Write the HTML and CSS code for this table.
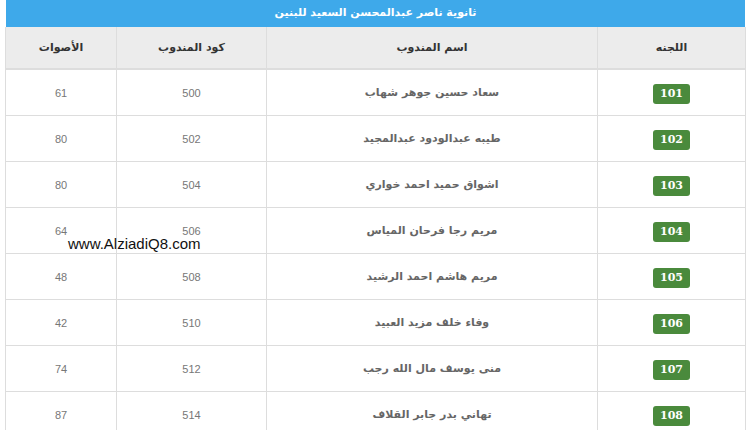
FILE: index.html
```html
<!DOCTYPE html>
<html lang="ar" dir="rtl">
<head>
<meta charset="utf-8">
<link rel="stylesheet" href="styles.css">
</head>
<body>
<div class="wrap">
  <div class="title">ثانوية ناصر عبدالمحسن السعيد للبنين</div>
  <table class="tbl">
    <thead>
      <tr><th class="c1">اللجنه</th><th class="c2">اسم المندوب</th><th class="c3">كود المندوب</th><th class="c4">الأصوات</th></tr>
    </thead>
    <tbody>
      <tr><td><span class="badge">101</span></td><td class="name">سعاد حسين جوهر شهاب</td><td class="num">500</td><td class="num">61</td></tr>
      <tr><td><span class="badge">102</span></td><td class="name">طيبه عبدالودود عبدالمجيد</td><td class="num">502</td><td class="num">80</td></tr>
      <tr><td><span class="badge">103</span></td><td class="name">اشواق حميد احمد خواري</td><td class="num">504</td><td class="num">80</td></tr>
      <tr><td><span class="badge">104</span></td><td class="name">مريم رجا فرحان المياس</td><td class="num">506</td><td class="num">64</td></tr>
      <tr><td><span class="badge">105</span></td><td class="name">مريم هاشم احمد الرشيد</td><td class="num">508</td><td class="num">48</td></tr>
      <tr><td><span class="badge">106</span></td><td class="name">وفاء خلف مزيد العبيد</td><td class="num">510</td><td class="num">42</td></tr>
      <tr><td><span class="badge">107</span></td><td class="name">منى يوسف مال الله رجب</td><td class="num">512</td><td class="num">74</td></tr>
      <tr><td><span class="badge">108</span></td><td class="name">تهاني بدر جابر القلاف</td><td class="num">514</td><td class="num">87</td></tr>
    </tbody>
  </table>
  <div class="watermark" dir="ltr">www.AlziadiQ8.com</div>
</div>
</body>
</html>
```
FILE: styles.css
```css
html, body {
  margin: 0;
  padding: 0;
  background: #ffffff;
}
body {
  font-family: "DejaVu Sans", sans-serif;
}
.wrap {
  position: relative;
  margin: 0 4px 0 5px;
  width: 741px;
}
.title {
  height: 27px;
  line-height: 25px;
  background: #3ea9ea;
  color: #ffffff;
  text-align: center;
  font-size: 11px;
  font-weight: bold;
  margin-left: 1px;
  margin-right: 1px;
}
.tbl {
  width: 741px;
  border-collapse: collapse;
  table-layout: fixed;
}
.tbl th, .tbl td {
  border: 1px solid #dddddd;
  text-align: center;
  vertical-align: middle;
  padding: 0;
}
.tbl th {
  height: 41px;
  background: #ececec;
  color: #333333;
  font-size: 11px;
  font-weight: bold;
  border-top: 0;
  border-bottom: 2px solid #dddddd;
}
.c1 { width: 147px; }
.c2 { width: 330px; }
.c3 { width: 149px; }
.c4 { width: 110px; }
.tbl td {
  height: 45px;
}
.name {
  color: #666666;
  font-size: 11px;
  font-weight: bold;
}
.num {
  color: #777777;
  font-family: "Liberation Sans", Arial, sans-serif;
  font-size: 11px;
}
.badge {
  display: inline-block;
  width: 37px;
  height: 20px;
  line-height: 20px;
  background: #4a8a3c;
  color: #ffffff;
  border-radius: 3px;
  font-family: "DejaVu Serif", serif;
  font-weight: bold;
  font-size: 11px;
}
.watermark {
  position: absolute;
  left: 63px;
  top: 235px;
  font-family: "Liberation Sans", Arial, sans-serif;
  font-size: 15px;
  color: #111111;
}
```
